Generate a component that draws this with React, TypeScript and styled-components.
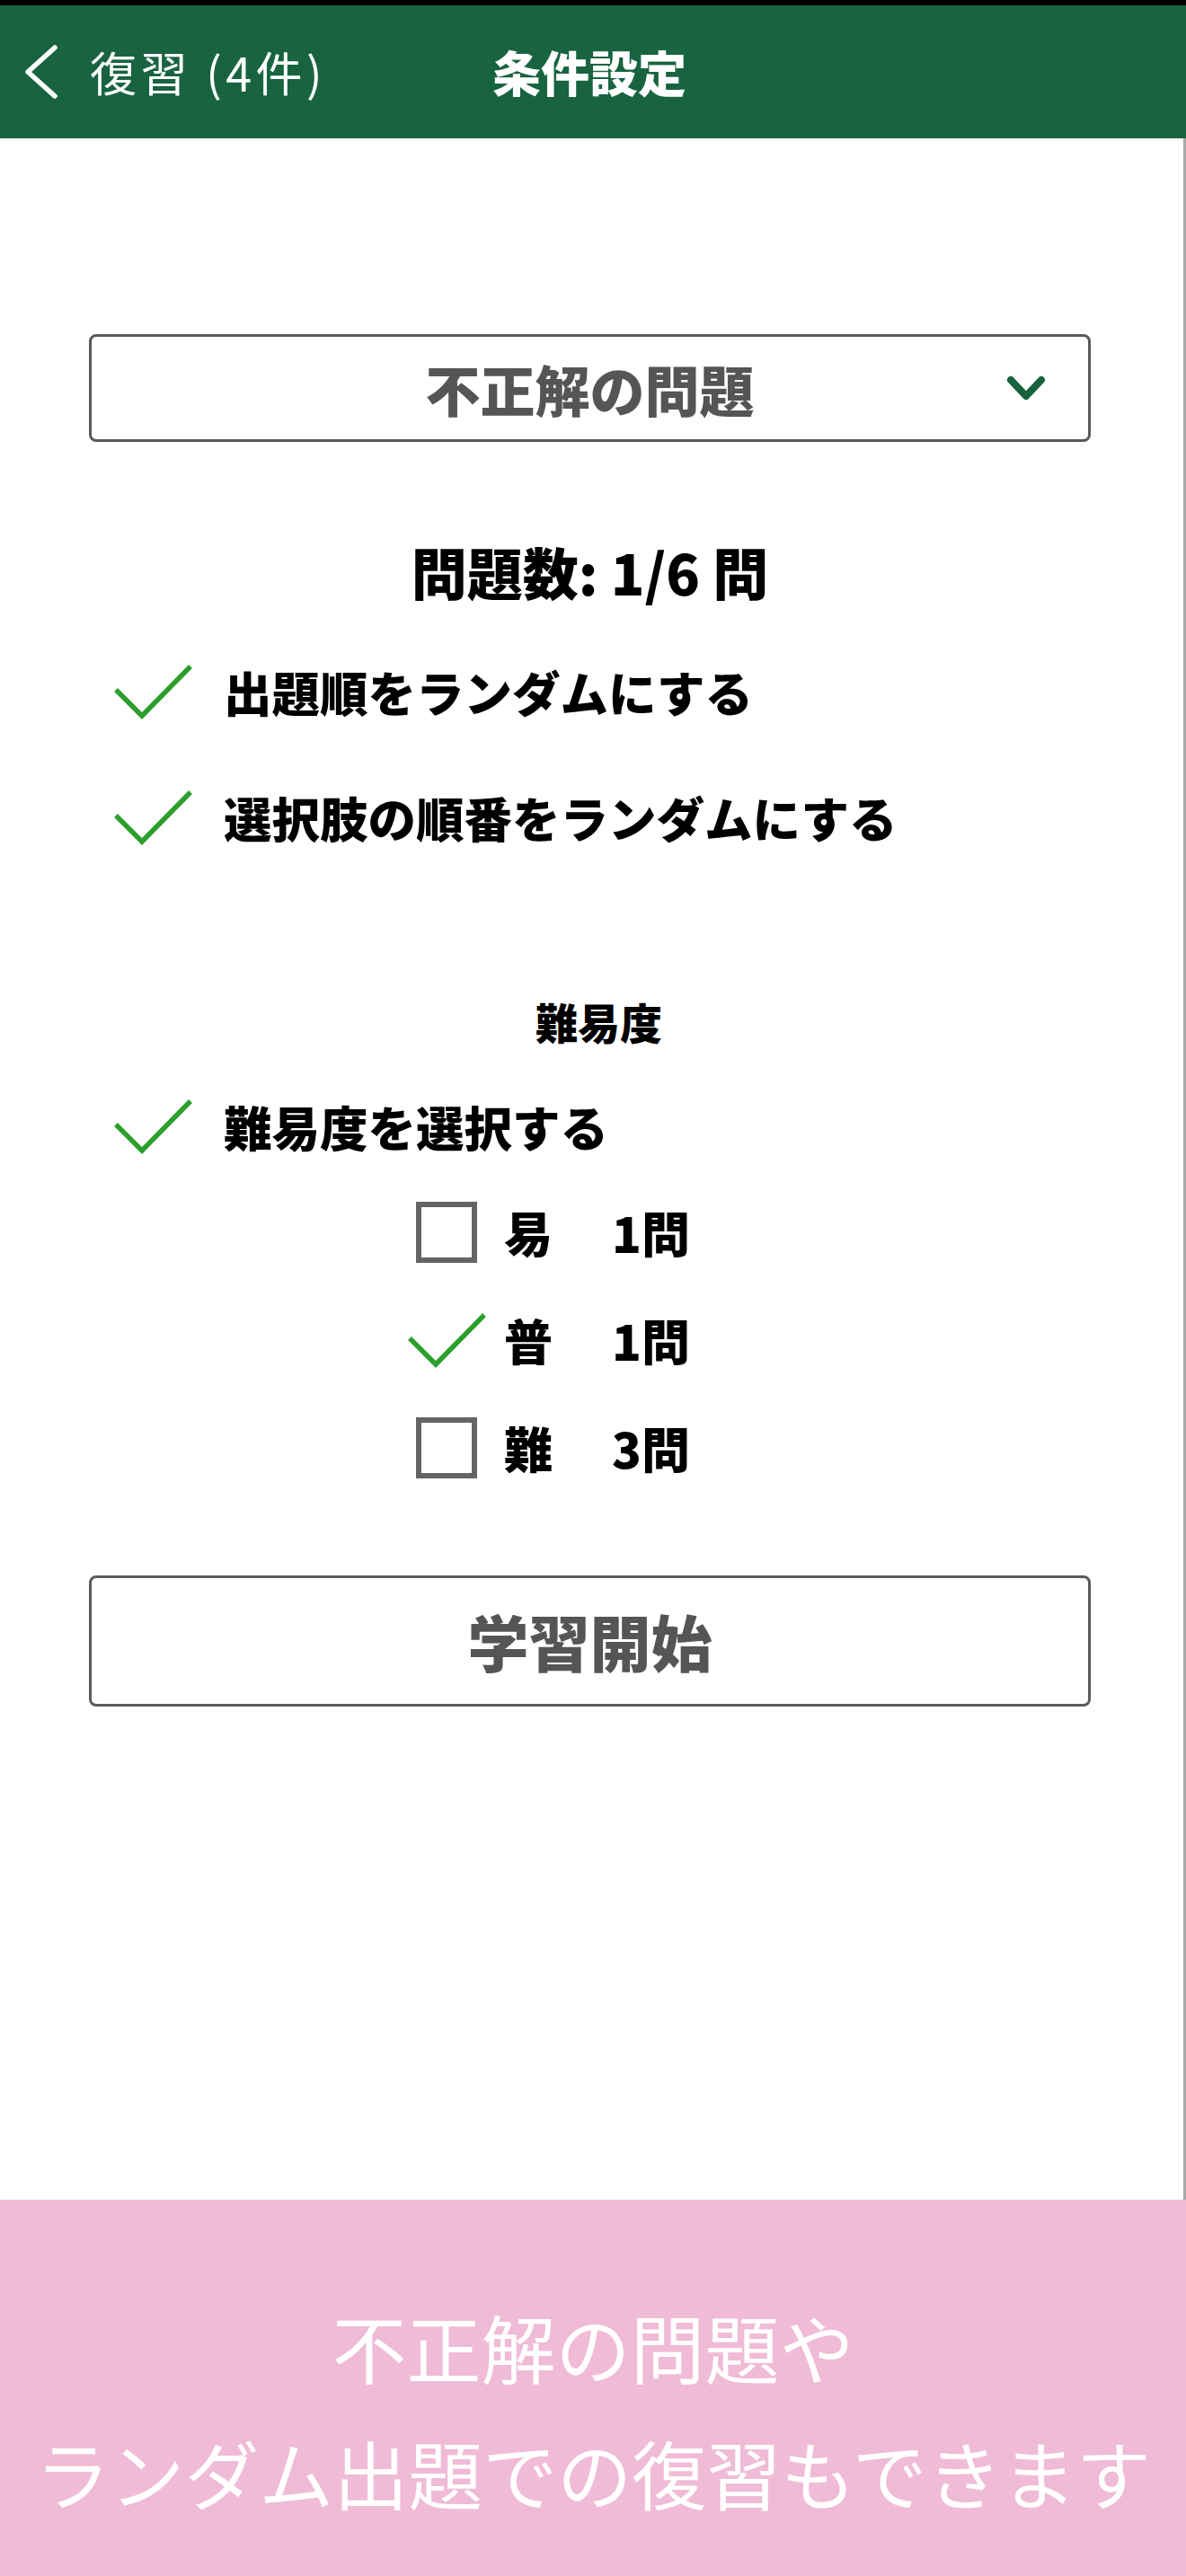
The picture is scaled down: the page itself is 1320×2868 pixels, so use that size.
import React from "react";
import styled, { createGlobalStyle } from "styled-components";

const GlobalStyle = createGlobalStyle`
  html, body {
    margin: 0;
    padding: 0;
    background: #ffffff;
  }
  body {
    font-family: "Noto Sans CJK JP", "Noto Sans", "Liberation Sans", sans-serif;
  }
  * { box-sizing: border-box; }
`;

const Page = styled.div`
  display: flex;
  flex-direction: column;
  width: 1320px;
  height: 2868px;
`;

const StatusStrip = styled.div`
  height: 6px;
  background: #000000;
`;

const Header = styled.header`
  height: 148px;
  background: #186440;
  display: grid;
  grid-template-columns: 1fr auto 1fr;
  align-items: center;
  color: #ffffff;
`;

const BackButton = styled.div`
  display: flex;
  align-items: center;
  gap: 34px;
  padding-left: 26px;
`;

const BackLabel = styled.span`
  font-size: 52px;
  font-weight: 400;
  line-height: 1;
  letter-spacing: 4.5px;
`;

const Title = styled.h1`
  margin: 0;
  font-size: 54px;
  font-weight: 900;
  line-height: 1;
  transform: translateX(-4px);
`;

const Content = styled.main`
  flex: 1;
  display: flex;
  flex-direction: column;
  padding: 0 103px 0 99px;
  border-right: 3px solid #a8a8a8;
`;

const Dropdown = styled.div`
  margin-top: 218px;
  height: 120px;
  border: 3px solid #5a5a5a;
  border-radius: 8px;
  display: grid;
  grid-template-columns: 1fr auto 1fr;
  align-items: center;
`;

const DropdownText = styled.span`
  grid-column: 2;
  font-size: 61px;
  font-weight: 900;
  color: #555555;
  line-height: 1;
`;

const DropdownChevron = styled.span`
  grid-column: 3;
  justify-self: end;
  display: flex;
  padding-right: 46px;
`;

const Heading = styled.h2<{ $size: number; $top: number; $shift?: number }>`
  margin: ${(p) => p.$top}px 0 0;
  height: 80px;
  display: flex;
  align-items: center;
  justify-content: center;
  font-size: ${(p) => p.$size}px;
  font-weight: 900;
  color: #000000;
  line-height: 1;
  padding-left: ${(p) => (p.$shift ?? 0) * 2}px;
`;

const OptionRow = styled.div<{ $top: number }>`
  margin-top: ${(p) => p.$top}px;
  height: 100px;
  display: flex;
  align-items: center;
  padding-left: 21px;
  gap: 29px;
`;

const IconSlot = styled.span`
  width: 100px;
  height: 70px;
  display: flex;
  align-items: center;
  justify-content: center;
  flex-shrink: 0;
`;

const OptionLabel = styled.span`
  font-size: 53.5px;
  font-weight: 900;
  color: #000000;
  line-height: 1;
`;

const SubList = styled.div`
  margin-top: 18px;
  display: flex;
  flex-direction: column;
  gap: 20px;
`;

const SubRow = styled.div`
  height: 100px;
  display: flex;
  align-items: center;
  padding-left: 348px;
`;

const SubLevel = styled.span`
  margin-left: 14px;
  width: 120px;
  font-size: 54px;
  font-weight: 900;
  color: #000000;
  line-height: 1;
`;

const SubCount = styled.span`
  font-size: 54px;
  font-weight: 900;
  color: #000000;
  line-height: 1;
`;

const EmptyBox = styled.span`
  width: 68px;
  height: 68px;
  border: 6px solid #646464;
  background: #ffffff;
`;

const StartButton = styled.button`
  margin-top: 92px;
  height: 146px;
  width: 100%;
  border: 3px solid #5a5a5a;
  border-radius: 8px;
  background: #ffffff;
  font-family: inherit;
  font-size: 68px;
  font-weight: 900;
  color: #555555;
  line-height: 1;
  padding: 0;
`;

const Footer = styled.footer`
  height: 419px;
  background: #f0bbd6;
  display: flex;
  flex-direction: column;
  align-items: center;
  padding-top: 93px;
`;

const FooterLine = styled.p`
  margin: 0;
  font-size: 83px;
  font-weight: 400;
  line-height: 140px;
  color: #ffffff;
  white-space: nowrap;
`;

const CheckMark = () => (
  <svg width="88" height="62" viewBox="0 0 88 62" fill="none">
    <polyline
      points="3,29 32,58 86,3"
      stroke="#2c9e2c"
      strokeWidth="5.5"
      strokeLinejoin="miter"
      strokeLinecap="butt"
    />
  </svg>
);

const BackChevron = () => (
  <svg width="40" height="64" viewBox="0 0 40 64" fill="none">
    <polyline
      points="35,5 5,32 35,59"
      stroke="#ffffff"
      strokeWidth="5.5"
      strokeLinecap="round"
      strokeLinejoin="round"
    />
  </svg>
);

const DownChevron = () => (
  <svg width="46" height="34" viewBox="0 0 46 34" fill="none">
    <polyline
      points="6,8 23,26 40,8"
      stroke="#17623f"
      strokeWidth="8"
      strokeLinecap="round"
      strokeLinejoin="round"
    />
  </svg>
);

type Level = { label: string; count: number; checked: boolean };

const levels: Level[] = [
  { label: "易", count: 1, checked: false },
  { label: "普", count: 1, checked: true },
  { label: "難", count: 3, checked: false },
];

export default function App() {
  return (
    <>
      <GlobalStyle />
      <Page>
        <StatusStrip />
        <Header>
          <BackButton>
            <BackChevron />
            <BackLabel>復習 (4件)</BackLabel>
          </BackButton>
          <Title>条件設定</Title>
          <span />
        </Header>
        <Content>
          <Dropdown>
            <DropdownText>不正解の問題</DropdownText>
            <DropdownChevron>
              <DownChevron />
            </DropdownChevron>
          </Dropdown>

          <Heading $size={62} $top={104}>問題数: 1/6 問</Heading>

          <OptionRow $top={44}>
            <IconSlot>
              <CheckMark />
            </IconSlot>
            <OptionLabel>出題順をランダムにする</OptionLabel>
          </OptionRow>
          <OptionRow $top={40}>
            <IconSlot>
              <CheckMark />
            </IconSlot>
            <OptionLabel>選択肢の順番をランダムにする</OptionLabel>
          </OptionRow>

          <Heading $size={47} $top={136} $shift={10}>難易度</Heading>

          <OptionRow $top={28}>
            <IconSlot>
              <CheckMark />
            </IconSlot>
            <OptionLabel>難易度を選択する</OptionLabel>
          </OptionRow>

          <SubList>
            {levels.map((lv) => (
              <SubRow key={lv.label}>
                <IconSlot>{lv.checked ? <CheckMark /> : <EmptyBox />}</IconSlot>
                <SubLevel>{lv.label}</SubLevel>
                <SubCount>{lv.count}問</SubCount>
              </SubRow>
            ))}
          </SubList>

          <StartButton>学習開始</StartButton>
        </Content>
        <Footer>
          <FooterLine>不正解の問題や</FooterLine>
          <FooterLine>ランダム出題での復習もできます</FooterLine>
        </Footer>
      </Page>
    </>
  );
}
